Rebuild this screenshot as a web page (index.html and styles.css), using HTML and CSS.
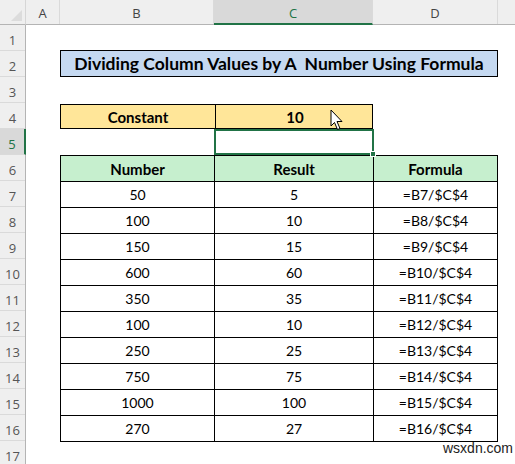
FILE: index.html
```html
<!DOCTYPE html>
<html lang="en">
<head>
  <meta charset="UTF-8">
  <title>Dividing Column Values</title>
  <link rel="stylesheet" href="styles.css">
</head>
<body>
  <div class="sheet">
    <div class="corner"><span class="corner-tri"></span></div>

    <div class="col-bar">
      <div class="col-head col-a">A</div>
      <div class="col-head col-b">B</div>
      <div class="col-head col-c active">C</div>
      <div class="col-head col-d">D</div>
      <div class="col-head col-e"></div>
    </div>

    <div class="row-bar">
      <div class="row-head">1</div>
      <div class="row-head">2</div>
      <div class="row-head">3</div>
      <div class="row-head">4</div>
      <div class="row-head active">5</div>
      <div class="row-head">6</div>
      <div class="row-head">7</div>
      <div class="row-head">8</div>
      <div class="row-head">9</div>
      <div class="row-head">10</div>
      <div class="row-head">11</div>
      <div class="row-head">12</div>
      <div class="row-head">13</div>
      <div class="row-head">14</div>
      <div class="row-head">15</div>
      <div class="row-head">16</div>
      <div class="row-head">17</div>
    </div>

    <div class="cells">
      <div class="title">Dividing Column Values by A&nbsp; Number Using Formula</div>

      <div class="constant">
        <div class="const-cell">Constant</div>
        <div class="const-cell">10</div>
      </div>

      <div class="selected"><span class="handle"></span></div>

      <table class="data">
        <thead>
          <tr><th>Number</th><th>Result</th><th>Formula</th></tr>
        </thead>
        <tbody>
          <tr><td>50</td><td>5</td><td>=B7/$C$4</td></tr>
          <tr><td>100</td><td>10</td><td>=B8/$C$4</td></tr>
          <tr><td>150</td><td>15</td><td>=B9/$C$4</td></tr>
          <tr><td>600</td><td>60</td><td>=B10/$C$4</td></tr>
          <tr><td>350</td><td>35</td><td>=B11/$C$4</td></tr>
          <tr><td>100</td><td>10</td><td>=B12/$C$4</td></tr>
          <tr><td>250</td><td>25</td><td>=B13/$C$4</td></tr>
          <tr><td>750</td><td>75</td><td>=B14/$C$4</td></tr>
          <tr><td>1000</td><td>100</td><td>=B15/$C$4</td></tr>
          <tr><td>270</td><td>27</td><td>=B16/$C$4</td></tr>
        </tbody>
      </table>
    </div>

    <div class="watermark">wsxdn.com</div>

    <svg class="cursor" width="14" height="22" viewBox="0 0 14 22">
      <path d="M1 1 L1 17 L4.5 13.5 L7.5 20.5 L10 19.5 L7 12.5 L12 12.5 Z" fill="#fff" stroke="#000" stroke-width="1" stroke-linejoin="round"/>
    </svg>
  </div>
</body>
</html>
```

FILE: styles.css
```css
* {
  box-sizing: border-box;
}

body {
  margin: 0;
  background: #fff;
  font-family: "Lato", "Open Sans", sans-serif;
  overflow: hidden;
}

.sheet {
  position: relative;
  display: grid;
  grid-template-columns: 26px 1fr;
  grid-template-rows: 25px 1fr;
  width: 515px;
  height: 464px;
  overflow: hidden;
}

/* headers */

.corner {
  position: relative;
  background: #efefef;
  border-bottom: 1px solid #b4b4b4;
  border-right: 1px solid #d6d6d6;
}

.corner-tri {
  position: absolute;
  right: 3px;
  bottom: 3px;
  width: 0;
  height: 0;
  border-left: 11px solid transparent;
  border-bottom: 11px solid #dcdcdc;
}

.col-bar {
  display: flex;
  background: #efefef;
  border-bottom: 1px solid #b4b4b4;
}

.col-head {
  flex: none;
  border-right: 1px solid #dadada;
  color: #444;
  font-family: "Open Sans", sans-serif;
  font-size: 13px;
  display: flex;
  align-items: center;
  justify-content: center;
  padding-top: 2px;
}

.col-a { width: 34px; }
.col-b { width: 154px; }
.col-c { width: 159px; }
.col-d { width: 125px; }
.col-e { flex: 1; border-right: none; }

.col-head.active {
  background: #d9d9d9;
  border-bottom: 2px solid #217346;
  margin-bottom: -1px;
  color: #217346;
}

.row-bar {
  display: flex;
  flex-direction: column;
  background: #efefef;
  border-right: 1px solid #b4b4b4;
}

.row-head {
  flex: none;
  height: 26px;
  border-bottom: 1px solid #dadada;
  color: #555;
  font-family: "Open Sans", sans-serif;
  font-size: 13px;
  display: flex;
  align-items: center;
  justify-content: center;
  padding-top: 4px;
}

.row-head.active {
  background: #d9d9d9;
  border-right: 2px solid #217346;
  margin-right: -1px;
  color: #217346;
}

/* cell area */

.cells {
  display: grid;
  grid-template-columns: 34px 154px 159px 125px 1fr;
  grid-template-rows: repeat(17, 26px);
}

.title {
  grid-column: 2 / 5;
  grid-row: 2;
  background: #c5d9f1;
  border: 1px solid #000;
  margin-top: -1px;
  font-weight: bold;
  font-size: 17.5px;
  color: #000;
  display: flex;
  align-items: center;
  justify-content: center;
}

.constant {
  grid-column: 2 / 4;
  grid-row: 4;
  display: grid;
  grid-template-columns: 154px 159px;
  background: #ffe699;
  border: 1px solid #000;
  margin-top: 1px;
}

.const-cell {
  display: flex;
  align-items: center;
  justify-content: center;
  font-weight: bold;
  font-size: 15px;
}

.const-cell + .const-cell {
  border-left: 1px solid #000;
}

.selected {
  grid-column: 3;
  grid-row: 5;
  position: relative;
  border: 2px solid #217346;
  margin-right: -1px;
  z-index: 2;
}

.handle {
  position: absolute;
  right: -4px;
  bottom: -4px;
  width: 6px;
  height: 6px;
  background: #217346;
  border: 1px solid #fff;
}

.data {
  grid-column: 2 / 5;
  grid-row: 6 / 17;
  border-collapse: collapse;
  width: 100%;
  height: 100%;
  table-layout: fixed;
}

.data th,
.data td {
  border: 1px solid #000;
  text-align: center;
  height: 26px;
  padding: 0;
  font-size: 14px;
  color: #000;
}

.data th {
  background: #c6efce;
  font-weight: bold;
  font-size: 15px;
}

.data th:nth-child(1) {
  width: 154px;
}

.data th:nth-child(2) {
  width: 159px;
}

.watermark {
  position: absolute;
  left: 443px;
  top: 440px;
  font-family: "Liberation Sans", Arial, sans-serif;
  font-size: 14px;
  color: #222;
}

.cursor {
  position: absolute;
  left: 330px;
  top: 109px;
  z-index: 3;
}
```
